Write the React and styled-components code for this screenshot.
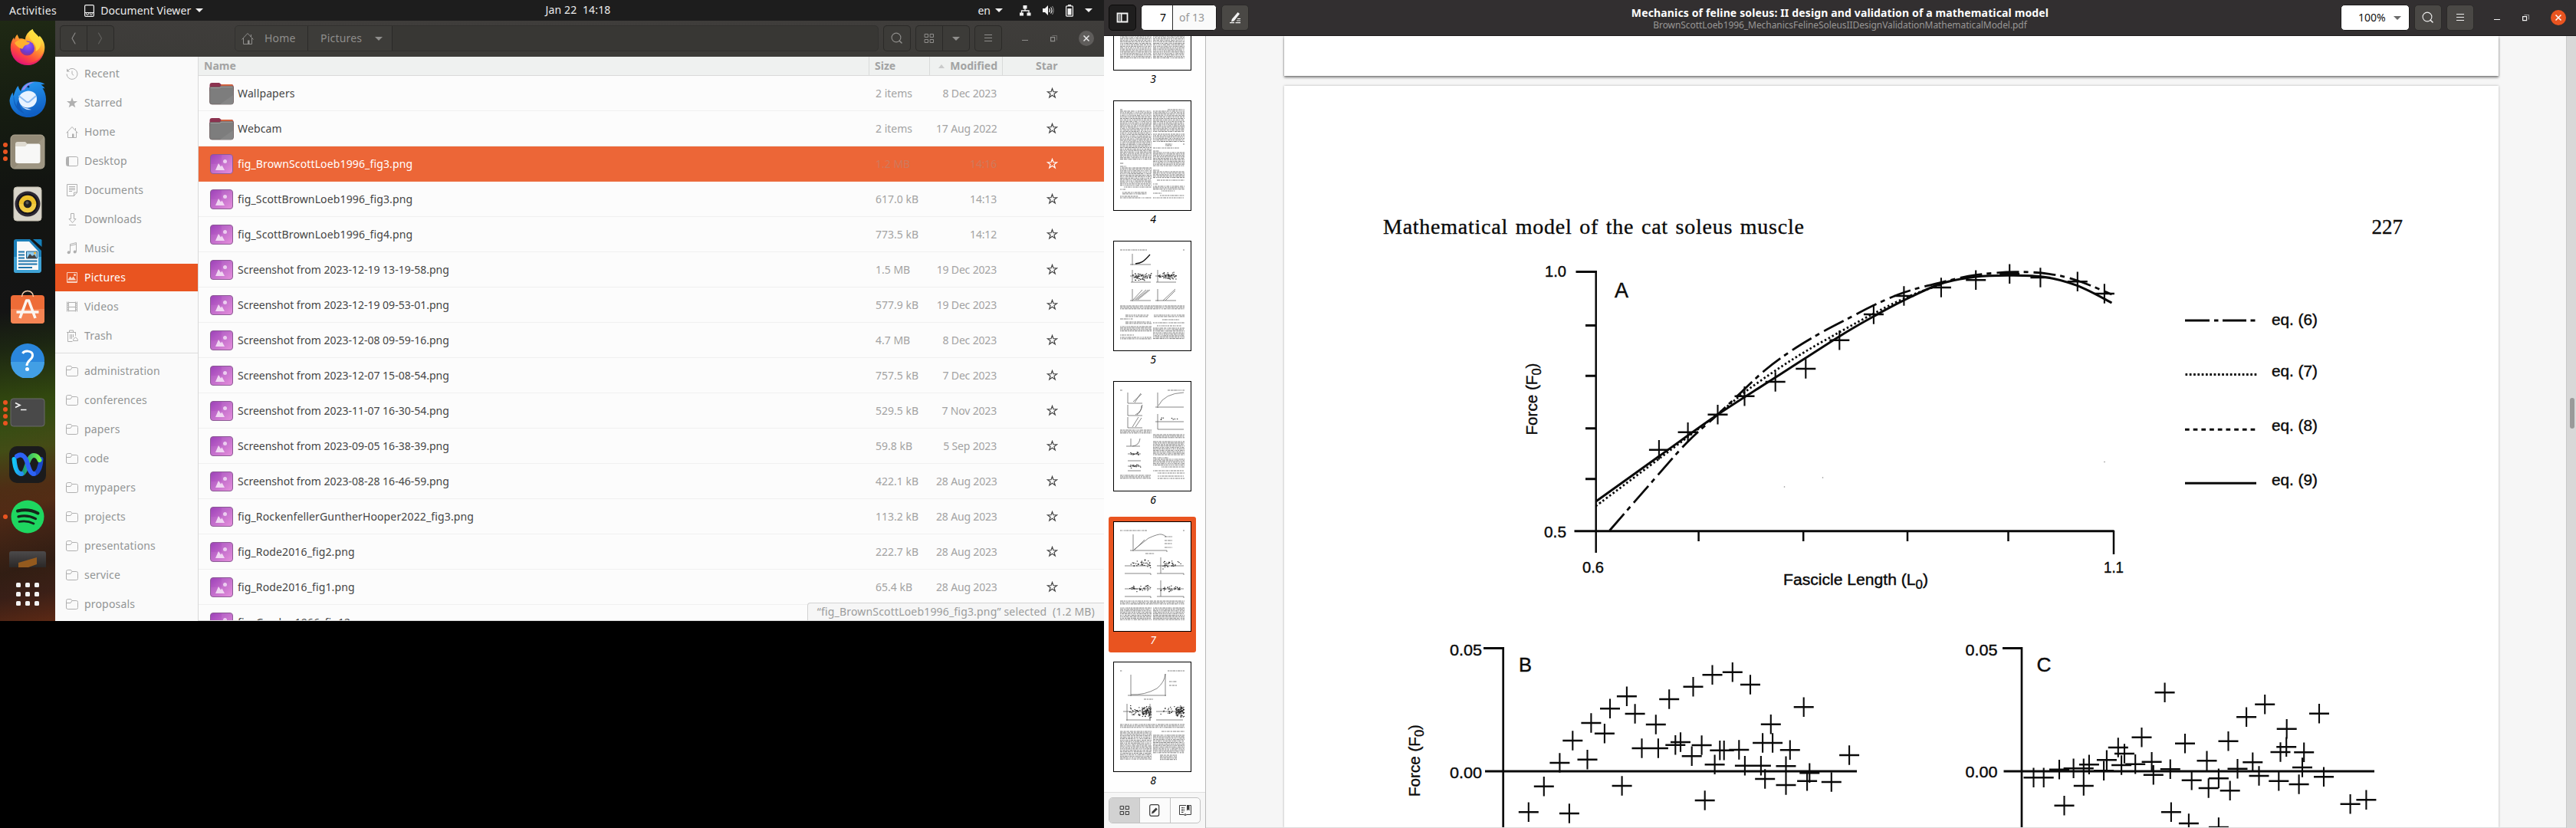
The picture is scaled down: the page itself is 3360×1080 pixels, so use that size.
import React from "react";
import styled, { createGlobalStyle, css } from "styled-components";

const Global = createGlobalStyle`
  *, *::before, *::after { box-sizing: border-box; }
  html, body { margin: 0; padding: 0; background: #000; overflow: hidden; }
  body { font-family: "Noto Sans", "Open Sans", sans-serif; font-size: 14px; line-height: 20px; }
  svg { display: block; flex: none; }
`;

/* ---------- screens ---------- */
const Screens = styled.div`
  display: grid;
  grid-template-columns: 1440px 1920px;
  width: 3360px;
  height: 1080px;
  overflow: hidden;
  background: #000;
`;
const Desktop = styled.div`
  display: grid;
  grid-template-rows: 27px 783px;
  height: 810px;
  overflow: hidden;
`;
const Workspace = styled.div`
  display: grid;
  grid-template-columns: 72px 1fr;
  min-height: 0;
`;

/* ---------- top bar ---------- */
const TopBar = styled.header`
  display: grid;
  grid-template-columns: 1fr auto 1fr;
  align-items: center;
  padding: 0 15px 0 12px;
  background: #1d1d1d;
  color: #ececec;
  white-space: pre;
`;
const BarGroup = styled.div`
  display: flex;
  align-items: center;
  justify-content: ${(p) => (p.$end ? "flex-end" : "flex-start")};
  gap: ${(p) => p.$gap || 0}px;
`;
const BarText = styled.span`
  letter-spacing: ${(p) => p.$ls || 0}px;
  margin-right: ${(p) => p.$mr || 0}px;
`;
const Clock = styled.div`
  letter-spacing: 0.15px;
  padding-left: 71px;
  padding-bottom: 1px;
`;
const Caret = styled.i`
  width: 0;
  height: 0;
  border: 5px solid transparent;
  border-bottom: 0;
  border-top-color: ${(p) => p.$c || "#f2f2f2"};
`;

/* ---------- dock ---------- */
const DockBar = styled.nav`
  display: flex;
  flex-direction: column;
  padding-top: 1px;
  background:
    linear-gradient(165deg, transparent 66%, rgba(110, 52, 16, 0.55) 80%, rgba(40, 24, 18, 0.5) 90%, rgba(110, 46, 20, 0.5) 100%),
    linear-gradient(172deg, #1f2914 0, #161d11 14%, #121411 28%, #141414 48%, #1c2612 54%, #32480f 63%, #3a5117 71%, #3a2a18 77%, #2c1d1c 82%, #3a2314 91%, #2c1c1b 95%, #4a2415 100%);
`;
const DockItem = styled.div`
  position: relative;
  display: flex;
  align-items: center;
  justify-content: center;
  height: 68px;
`;
const Dots = styled.div`
  position: absolute;
  left: 4px;
  top: 0;
  bottom: 0;
  display: flex;
  flex-direction: column;
  justify-content: center;
  gap: 3px;
`;
const Dot = styled.i`
  width: 6px;
  height: 6px;
  border-radius: 50%;
  background: #e95420;
`;
const DockPeek = styled.div`
  height: 32px;
  padding: 10px 12px 0;
`;
const AppsButton = styled.div`
  display: grid;
  grid-template-columns: repeat(3, 6px);
  gap: 6px;
  justify-content: center;
  align-content: start;
  padding-top: 20px;
  i { width: 6px; height: 6px; border-radius: 1.5px; background: #f2f2f2; }
`;

/* ---------- files window ---------- */
const FilesWindow = styled.section`
  display: grid;
  grid-template-rows: 47px 736px;
  min-width: 0;
`;
const FilesHeader = styled.div`
  display: flex;
  align-items: center;
  padding: 6px 13px 7px 6px;
  background: linear-gradient(#3f3d3b, #3c3b38);
  color: #8f8e8c;
`;
const HeaderButton = styled.div`
  display: flex;
  align-items: center;
  justify-content: center;
  width: ${(p) => p.$w}px;
  height: 34px;
  background: #3c3b38;
  box-shadow: inset 0 0 0 1px #2b2a28;
  border-radius: ${(p) => (p.$side === "l" ? "5px 0 0 5px" : p.$side === "r" ? "0 5px 5px 0" : "5px")};
  margin-left: ${(p) => (p.$side === "r" ? -1 : p.$ml || 0)}px;
`;
const PathBar = styled.div`
  display: flex;
  width: 840px;
  height: 34px;
  margin-left: 157px;
  border: 1px solid #32312f;
  border-radius: 5px;
  background: #383734;
  overflow: hidden;
`;
const PathItem = styled.div`
  display: flex;
  align-items: center;
  width: ${(p) => p.$w}px;
  padding-left: ${(p) => p.$pl}px;
  gap: ${(p) => p.$gap}px;
  background: #3d3c39;
  border-right: 1px solid #2b2a28;
  letter-spacing: 0.2px;
`;
const WindowControls = styled.div`
  display: flex;
  align-items: center;
  justify-content: space-between;
  margin-left: ${(p) => p.$ml}px;
  width: ${(p) => p.$w}px;
`;
const FilesBody = styled.div`
  display: grid;
  grid-template-columns: 187px 1fr;
  min-height: 0;
  height: 736px;
  background: #fcfcfc;
`;
const Places = styled.aside`
  display: flex;
  flex-direction: column;
  padding-top: 4px;
  background: #fafafa;
  border-right: 1px solid #d9d9d9;
  overflow: hidden;
`;
const Place = styled.div`
  display: flex;
  align-items: center;
  gap: 8px;
  flex: none;
  height: 36px;
  margin-bottom: 2px;
  padding-left: 14px;
  letter-spacing: 0.18px;
  color: ${(p) => (p.$on ? "#fff" : "#929595")};
  background: ${(p) => (p.$on ? "#e95420" : "transparent")};
`;
const PlacesRule = styled.hr`
  flex: none;
  width: 100%;
  height: 1px;
  margin: 2px 0 5px;
  border: 0;
  background: #dcdcdc;
`;
const Listing = styled.div`
  position: relative;
  display: flex;
  flex-direction: column;
  height: 736px;
  overflow: hidden;
  border-bottom: 1px solid #d9d9d9;
`;
const columns = css`
  display: grid;
  grid-template-columns: 875px 79px 95px 132px;
`;
const ListHeader = styled.div`
  ${columns}
  flex: none;
  height: 25px;
  background: #eff1f0;
  border-bottom: 1px solid #dadada;
  font-weight: 700;
  color: #a2a3a3;
`;
const HeadCell = styled.div`
  display: flex;
  align-items: center;
  gap: 7px;
  justify-content: ${(p) => (p.$end ? "flex-end" : "flex-start")};
  padding: 0 6px ${(p) => (p.$star ? "0 43px" : "0 7px")};
  border-right: ${(p) => (p.$star ? 0 : 1)}px solid #d9dada;
  ${(p) => p.$star && "padding-left: 43px;"}
`;
const SortMark = styled.i`
  border: 4.5px solid transparent;
  border-top: 0;
  border-bottom: 5px solid #c9caca;
`;
const FileRow = styled.div`
  ${columns}
  flex: none;
  align-items: center;
  height: 46px;
  border-bottom: 1px solid ${(p) => (p.$on ? "#ec7449" : "#f0f0f0")};
  background: ${(p) => (p.$on ? "#ec6637" : "#fcfcfc")};
  color: ${(p) => (p.$on ? "#fff" : "#454545")};
`;
const NameCell = styled.div`
  display: flex;
  align-items: center;
  gap: 5px;
  padding-left: 14px;
  letter-spacing: ${(p) => (p.$tight ? 0 : 0.14)}px;
`;
const MetaCell = styled.div`
  padding: 0 8px;
  white-space: nowrap;
  text-align: ${(p) => (p.$end ? "right" : "left")};
  letter-spacing: ${(p) => (p.$end ? -0.17 : 0)}px;
  color: ${(p) => (p.$on ? "#cf7a5c" : "#a3a3a3")};
`;
const StarCell = styled.div`
  padding-left: 57px;
`;
const StatusNote = styled.div`
  position: absolute;
  right: 0;
  bottom: -1px;
  height: 24px;
  padding: 1px 12px 0 12px;
  border: 1px solid #d2d2d2;
  border-width: 1px 0 0 1px;
  border-top-left-radius: 4px;
  background: #f6f6f6;
  color: #9b9c9c;
  white-space: pre;
  letter-spacing: 0.18px;
`;

/* ---------- document viewer ---------- */
const Viewer = styled.section`
  display: grid;
  grid-template-rows: 47px 1033px;
  background: #f6f6f6;
`;
const ViewerHeader = styled.header`
  display: grid;
  grid-template-columns: 660px 1fr 660px;
  align-items: center;
  background: #322f30;
  border-bottom: 1px solid #1e1c1d;
`;
const HeaderSide = styled.div`
  display: flex;
  align-items: center;
  padding: ${(p) => (p.$end ? "0 13px 0 0" : "0 0 0 6px")};
  justify-content: ${(p) => (p.$end ? "flex-end" : "flex-start")};
`;
const ToolButton = styled.div`
  display: flex;
  align-items: center;
  justify-content: center;
  width: ${(p) => p.$w || 34}px;
  height: 34px;
  margin-left: ${(p) => p.$ml || 0}px;
  border: 1px solid ${(p) => (p.$pressed ? "#0c0b0b" : "#2b2a29")};
  border-radius: 5px;
  background: ${(p) => (p.$pressed ? "#1f1e1e" : "#4a4845")};
`;
const PageField = styled.div`
  display: grid;
  grid-template-columns: 41px 1fr;
  width: 99px;
  height: 34px;
  margin-left: 6px;
  border: 1px solid #1b1a1a;
  border-radius: 5px;
  background: #fff;
  line-height: 32px;
  overflow: hidden;
`;
const PageNumber = styled.span`
  text-align: right;
  padding-right: 8px;
  border-right: 1px solid #2b2b2b;
  color: #000;
`;
const PageTotal = styled.span`
  padding-left: 8px;
  color: #979797;
  background: #fafafa;
`;
const ZoomField = styled.div`
  display: flex;
  align-items: center;
  gap: 10px;
  width: 90px;
  height: 34px;
  padding-left: 22px;
  border: 1px solid #1b1a1a;
  border-radius: 5px;
  background: #fff;
  color: #111;
`;
const Titles = styled.div`
  text-align: center;
  color: #fff;
  white-space: nowrap;
`;
const Title = styled.div`
  padding-top: 1px;
  font-weight: 700;
  letter-spacing: 0.14px;
  line-height: 18px;
`;
const Subtitle = styled.div`
  font-size: 12px;
  line-height: 14px;
  letter-spacing: -0.07px;
  color: #999796;
`;
const ViewerBody = styled.div`
  display: grid;
  grid-template-columns: 133px 1fr 13px;
  height: 1033px;
`;
const ThumbPane = styled.aside`
  display: grid;
  grid-template-rows: 986px 47px;
  background: #fefefe;
  border-right: 1px solid #b9b9b9;
  overflow: hidden;
`;
const ThumbList = styled.div`
  display: flex;
  flex-direction: column;
  justify-content: flex-end;
  align-items: center;
  gap: 6px;
  margin-bottom: -1px;
  padding-right: 6px;
  overflow: hidden;
`;
const Thumb = styled.div`
  flex: none;
  display: flex;
  flex-direction: column;
  align-items: center;
  width: 114px;
  height: 177px;
  padding-top: 6px;
  border-radius: 3px;
  background: ${(p) => (p.$on ? "#e95420" : "transparent")};
  color: ${(p) => (p.$on ? "#fff" : "#000")};
`;
const ThumbPaper = styled.div`
  width: 102px;
  height: 144px;
  border: 1px solid #000;
  background: #fff;
`;
const ThumbLabel = styled.div`
  padding-left: 2px;
  line-height: 22px;
  font-style: italic;
`;
const ThumbTools = styled.div`
  position: relative;
  padding: 6px 0 0 6px;
  background: #f6f6f6;
  border-top: 1px solid #dedede;
`;
const Segments = styled.div`
  display: grid;
  grid-template-columns: repeat(3, 1fr);
  width: 120px;
  height: 34px;
  border: 1px solid #c2c2c2;
  border-radius: 5px;
  overflow: hidden;
  background: #fbfbfb;
`;
const Segment = styled.div`
  display: flex;
  align-items: center;
  justify-content: center;
  background: ${(p) => (p.$on ? "#d2d2d2" : "transparent")};
  & + & { border-left: 1px solid #c2c2c2; }
`;
const Canvas = styled.main`
  display: flex;
  flex-direction: column;
  gap: 13px;
  padding: 0 88px 0 102px;
  overflow: hidden;
  border-bottom: 1px solid #dedede;
`;
const PrevSheet = styled.div`
  flex: none;
  height: 52px;
  background: #fff;
  box-shadow: 0 2px 3px rgba(0, 0, 0, 0.5), 0 0 1px rgba(0, 0, 0, 0.35);
`;
const Sheet = styled.article`
  flex: none;
  height: 968px;
  background: #fff;
  box-shadow: 0 0 3px rgba(0, 0, 0, 0.28);
  color: #0a0a0a;
`;
const RunningHead = styled.div`
  display: flex;
  justify-content: space-between;
  height: 228px;
  padding: 166px 125px 0 129px;
  font: 28px/36px "Liberation Serif", serif;
  -webkit-text-stroke: 0.35px #0a0a0a;
`;
const HeadTitle = styled.span`
  letter-spacing: 0.75px;
  word-spacing: 2px;
`;
const Folio = styled.span`
  font-size: 27px;
`;
const Track = styled.div`
  padding: 472px 0 0 4px;
  background: #d8d8d8;
  border-left: 1px solid #c9c9c9;
`;
const Knob = styled.div`
  width: 6px;
  height: 40px;
  border-radius: 3px;
  background: #9a9a9a;
`;
const FigText = styled.text`
  font-family: "Liberation Sans", sans-serif;
  fill: #0a0a0a;
  stroke: #0a0a0a;
  stroke-width: 0.4px;
`;

/* ---------- small icons ---------- */
const line = (c, w = 1) => ({ fill: "none", stroke: c, strokeWidth: w, strokeLinecap: "round", strokeLinejoin: "round" });
const SearchIcon = ({ c }) => (
  <svg width="16" height="16" viewBox="0 0 16 16" {...line(c, 1.1)}><circle cx="7" cy="7" r="5.9" /><path d="M11.2 11.2 14 14" strokeWidth="1.6" /></svg>
);
const MenuIcon = ({ c }) => (
  <svg width="16" height="16" viewBox="0 0 16 16" {...line(c)} strokeLinecap="butt"><path d="M3 3.5h10M3 7.5h10M3 11.5h10" /></svg>
);
const GridIcon = ({ c }) => (
  <svg width="14" height="14" viewBox="0 0 14 14" {...line(c)} strokeLinejoin="miter"><path d="M1.5 1.5h4v4h-4zM8.500 1.500h4v4h-4zM1.500 8.500h4v4h-4zM8.500 8.500h4v4h-4z" /></svg>
);
const MinIcon = ({ c }) => <svg width="8" height="10" viewBox="0 0 8 10"><path d="M0 7h8v1H0z" fill={c} /></svg>;
const MaxIcon = ({ c }) => (
  <svg width="9" height="9" viewBox="0 0 9 9" fill="none" stroke={c}><path d="M.6 2.600h5v5h-5z" strokeWidth="1.2" /><path d="M2.500.5h6v6" opacity=".55" /></svg>
);
const CloseIcon = ({ bg, c }) => (
  <svg width="20" height="20" viewBox="0 0 20 20"><circle cx="10" cy="10" r="10" fill={bg} /><path d="M6.500 6.500l7 7m0-7l-7 7" stroke={c} strokeWidth="1.500" /></svg>
);
const Chevron = ({ flip, c }) => (
  <svg width="10" height="18" viewBox="0 0 10 18" {...line(c, 1.1)}><path d={flip ? "M2.500 2l4 7-4 7" : "M7 2L3 9l4 7"} /></svg>
);
const StarIcon = ({ c }) => (
  <svg width="15" height="15" viewBox="0 0 13 13" fill="none" stroke={c} strokeWidth="1"><path d="M6.500 1.200l1.300 3.700 4 .05-3.200 2.400 1.200 3.900-3.300-2.300-3.300 2.300 1.200-3.900L1.200 4.950l4-.05z" /></svg>
);
const HomeGlyph = ({ c }) => (
  <svg width="16" height="16" viewBox="0 0 16 16" fill="none" stroke={c}><path d="M.5 9.500L8 1.500l7.500 8M2.500 8v7.500h11V8M12.500 3v3" /><path d="M8 10.500h2.500v5H8z" fill={c} stroke="none" /></svg>
);

const placeGlyphs = {
  recent: <g><path d="M3.200 3.300A7 7 0 1 1 1 8.500" /><path d="M8 4.500v4l2.200 1.800" /><path d="M1 1.500v4h4z" className="f" /></g>,
  starred: <path className="f" d="M8 1l1.800 4.900 5.200.2-4.100 3.200 1.400 5L8 11.400l-4.300 2.900 1.400-5L1 6.100l5.200-.2z" />,
  desktop: <g><rect x=".5" y="2.500" width="15" height="12" rx="2" /><path className="f" d="M1 3h3v11H1z" /></g>,
  documents: <g><path d="M1.500.5h13v10.500l-4 4.500h-9z" /><path d="M14.500 11h-4v4.500M4 3.500h8M4 5.500h8M4 7.500h8M4 9.500h4" /></g>,
  downloads: <path d="M6.500.5h4v7h2.500l-4.500 5-4.500-5h2.500zM4 15.500h9" />,
  music: <g><path d="M5.500 13V2.500l8-2V12M5.500 4.500l8-2" /><circle className="f" cx="3.700" cy="13.300" r="2" /><circle className="f" cx="11.700" cy="12.500" r="2" /></g>,
  pictures: <g><path d="M1.500 1.500h13v13h-13z" /><path className="f" d="M2 11.500l3.500-5 2.200 2.500 2-2.500 3.500 5zM2 13h12v2H2z" /><circle className="f" cx="11.500" cy="4.500" r="1.500" /></g>,
  videos: <path d="M1.500 1.500v13M3.500 1.500v13M12.500 1.500v13M14.500 1.500v13M3.500 2.500h9M3.500 8.500h9M3.500 13.500h9M1.500 3.500h2M1.500 6h2M1.500 9h2M1.500 12h2M12.500 3.500h2M12.500 6h2M12.500 9h2M12.500 12h2" />,
  trash: <g><path d="M1 3.500h12M4.500 3.500v-2.500h5v2.500M2.500 4v11.500h6M12.500 4v4M5.500 6v6M7.500 6v6M9.500 6v4" /><path d="M12.500 9.500c-1.500 2-3.500 3-3 5h6c.5-2-1.500-3-3-5z" /></g>,
  folder: <path d="M.5 13V3.500a2 2 0 0 1 2-2h4l1.500 2h5.500a2 2 0 0 1 2 2v7a2 2 0 0 1-2 2h-11a2 2 0 0 1-2-2M.5 6.500h5.500l2-3" />,
};
const GlyphSvg = styled.svg`
  fill: none;
  stroke: ${(p) => p.$c};
  stroke-width: 1;
  .f { fill: ${(p) => p.$c}; stroke: none; }
`;
const PlaceGlyph = ({ name, on }) =>
  name === "home" ? <HomeGlyph c="#b0b0b0" /> : (
    <GlyphSvg width="16" height="16" viewBox="0 0 16 16" $c={on ? "#f8d0c0" : "#b0b0b0"}>{placeGlyphs[name]}</GlyphSvg>
  );

const FolderIcon = () => (
  <svg width="32" height="30" viewBox="0 0 32 30">
    <path d="M.5 4a3 3 0 0 1 3-3h9.500l2.500 2h13a3 3 0 0 1 3 3v6H.5z" fill="#8c3350" />
    <path d="M15.500 3h13a3 3 0 0 1 3 2.500l-17 .5z" fill="#d9653f" />
    <path d="M.5 8a1.500 1.500 0 0 1 1.500-1.500h11l2.500-1.200H30a1.500 1.500 0 0 1 1.500 1.500V26a3 3 0 0 1-3 3h-25a3 3 0 0 1-3-3z" fill="#7d7d7d" stroke="#6a5a5c" strokeWidth=".8" />
    <path d="M1.500 7.500h12l2.500-1.300h14.500" stroke="#a8a8a8" fill="none" strokeWidth=".8" />
    <path d="M31 17v9a3 3 0 0 1-3 3H14z" fill="#868686" />
  </svg>
);
const ImageIcon = () => (
  <svg width="32" height="28" viewBox="0 0 32 28">
    <defs>
      <linearGradient id="im" x1="0" y1="0" x2="1" y2="1"><stop offset="0" stopColor="#9c42b8" /><stop offset="1" stopColor="#e58adb" /></linearGradient>
    </defs>
    <rect x="1.500" y="1.500" width="29" height="25" rx="3.500" fill="url(#im)" stroke="#8b5a94" strokeWidth="1" />
    <path d="M16 2h14v12H16z" fill="#fff" opacity=".07" />
    <path d="M2 14h28v9.500a3 3 0 0 1-3 3H5a3 3 0 0 1-3-3z" fill="#fff" opacity=".06" />
    <path d="M8 22l4-9 3 4.500 1.500-2L20 22z" fill="#f0d6f2" />
    <circle cx="20.500" cy="10.500" r="2.500" fill="#eccdf0" />
  </svg>
);

/* ---------- dock icons ---------- */
const Firefox = () => (
  <svg width="46" height="48" viewBox="0 0 46 48">
    <defs>
      <linearGradient id="ff1" x1=".8" y1=".1" x2=".3" y2="1"><stop offset="0" stopColor="#fff44f" /><stop offset=".35" stopColor="#ffa52e" /><stop offset=".7" stopColor="#ff4a3d" /><stop offset="1" stopColor="#e3107a" /></linearGradient>
      <radialGradient id="ff2" cx=".55" cy=".3" r=".8"><stop offset="0" stopColor="#9059ff" /><stop offset=".6" stopColor="#6a3bd0" /><stop offset="1" stopColor="#a4306f" /></radialGradient>
    </defs>
    <path d="M23 47A22.500 22.500 0 0 1 .8 24C.7 19 2 15 5 11l1 3c.5-3 1.500-5 3.500-7l2.500 5.500c3-.6 6 .1 8 1.200C20 8 24 3 29.500 0c1 4 5 6 8.500 10.500l.500-2C43 13 45.500 18.500 45.300 24 45 37 35 47 23 47z" fill="url(#ff1)" />
    <circle cx="22.500" cy="25" r="9.500" fill="url(#ff2)" />
    <path d="M6 18c4-4 9-5 13-3.500 2 1.500 4 2.500 7 3-1 3-5 3-6 3.500-1.500 1-2 1.500-3.500 4.500C14 26 9 23 6 18z" fill="#ffb02e" />
    <path d="M29.500 0c-4 5-6 9-2 14 4 4 8 9 6 15 6-3 8-9 6-16C37 8 31 6 29.500 0z" fill="#ffdf3d" opacity=".85" />
    <path d="M2 30c4 12 16 17 26 14 8-2 14-8 16-15-2 12-11 18-21 18S4 41 2 30z" fill="#e01574" opacity=".6" />
  </svg>
);
const Thunderbird = () => (
  <svg width="48" height="48" viewBox="0 0 48 48">
    <defs><linearGradient id="tb" x1="0" y1="0" x2=".3" y2="1"><stop offset="0" stopColor="#2aa0f5" /><stop offset="1" stopColor="#0f5fc4" /></linearGradient></defs>
    <path d="M25 47C11 47 1 37 .5 25 1 21 2.500 17 4.500 14.500l1 5C7 14 9 9 11.500 6c1 3 2 5 3.500 7 2-8 9-13 19-12.500 5 .1 9 1 12.500 3.200l-5 .8c2 1 4 3 5 5l-3-.5c2.500 3.500 4.500 9 4.500 14.500C48 37 38 47 25 47z" fill="url(#tb)" />
    <path d="M16 12C20 3 28 .5 33 1c-6 2-10 5-13 10z" fill="#9a8cf0" />
    <path d="M6 17c-2 12 4 22 14 25-6-6-8-14-5-21-4 4-6 8-5 12C7 28 6 23 6 17z" fill="#0e55b4" opacity=".8" />
    <circle cx="25" cy="7" r="1.500" fill="#0a2d66" />
    <path d="M12.500 22c1-6 8-9.500 12.500-9.500 6 0 10.500 3.500 11 9.500.5 7-5 12.500-12 12.500S12 29 12.500 22z" fill="#e8f3ff" />
    <path d="M12.500 19l9.500 7.500c1.500 1 3 1 4.500 0L35 19" fill="none" stroke="#8ebcf0" strokeWidth="2" />
    <path d="M16 32c5 4 8 3 13 5-6 1-10-1-13-5z" fill="#dbeaff" />
  </svg>
);
const FilesApp = () => (
  <svg width="46" height="46" viewBox="0 0 46 46">
    <rect x="1" y="1" width="44" height="44" rx="5" fill="#948b78" stroke="#b0a794" />
    <path d="M45 3v38a4 4 0 0 1-4 4H5z" fill="#a39b88" opacity=".7" />
    <path d="M7 13a3 3 0 0 1 3-3h10l3 3v8H7z" fill="#dedad0" />
    <path d="M7 16h13l3-3.500h14a2.500 2.500 0 0 1 2.500 2.500v20a3 3 0 0 1-3 3H10a3 3 0 0 1-3-3z" fill="#f7f7f6" />
  </svg>
);
const Rhythmbox = () => (
  <svg width="38" height="46" viewBox="0 0 38 46">
    <rect x="1" y="1" width="36" height="44" rx="4" fill="#d9d5ca" stroke="#c3beb0" />
    <circle cx="19" cy="23" r="16.500" fill="#2c2833" /><circle cx="19" cy="23" r="13.500" fill="#14121a" />
    <circle cx="19" cy="23" r="11.300" fill="#edc02c" /><path d="M7.700 23a11.300 11.300 0 0 0 22.600 0z" fill="#f6d65a" opacity=".5" />
    <circle cx="19" cy="23" r="5.300" fill="#222" /><circle cx="18.500" cy="21.500" r="2" fill="#555" />
  </svg>
);
const Writer = () => (
  <svg width="38" height="46" viewBox="0 0 38 46">
    <path d="M4 1h18l15 15v25a4 4 0 0 1-4 4H4a3 3 0 0 1-3-3V4a3 3 0 0 1 3-3z" fill="#1c7fb8" />
    <path d="M1 24h36v17a4 4 0 0 1-4 4H4a3 3 0 0 1-3-3z" fill="#3fa2d5" />
    <path d="M5 4h16l12 13v24H5z" fill="#f9f9f9" />
    <path d="M26 1h10a1.500 1.500 0 0 1 1.500 1.500V11z" fill="#1580ba" />
    <path d="M7 17.500h8M7 21.500h8M7 25.500h8M7 29.500h24.500M7 33.500h24.500M7 38h18" stroke="#1c74ab" strokeWidth="1.800" />
    <path d="M17.500 17h14v9h-14z" fill="#8fcbee" stroke="#1c5f8a" /><path d="M18 26l4-6 3 3 3-2 3 5z" fill="#444" /><circle cx="28.500" cy="19" r="1.500" fill="#f0b030" />
  </svg>
);
const Software = () => (
  <svg width="46" height="48" viewBox="0 0 46 48">
    <rect x="1" y="7" width="44" height="37" rx="4" fill="#ee6c37" /><path d="M1 25h44v15a4 4 0 0 1-4 4H5a4 4 0 0 1-4-4z" fill="#f58453" />
    <path d="M15.500 9c0-10 15-10 15 0" fill="none" stroke="#f3c9a8" strokeWidth="1.500" />
    <path d="M13 37l8.500-23h3L33 37M8.500 29h29" fill="none" stroke="#fbf5f0" strokeWidth="3.600" strokeLinejoin="round" />
  </svg>
);
const HelpApp = () => (
  <svg width="46" height="46" viewBox="0 0 46 46">
    <circle cx="23" cy="23" r="22" fill="#2a86dc" /><path d="M1 25h44a22 22 0 0 1-44 0z" fill="#429fe5" />
    <path d="M16.500 14c2-4 13-4.500 13 2.500 0 6-7.500 6-7.500 13.500" fill="none" stroke="#fff" strokeWidth="3" /><circle cx="22.500" cy="34.500" r="2.500" fill="#fff" />
  </svg>
);
const Terminal = () => (
  <svg width="46" height="38" viewBox="0 0 46 38">
    <rect x="1" y="1" width="44" height="36" rx="3.500" fill="#494949" stroke="#6b6b6b" />
    <path d="M7 6.500l6 3-6 3M14 15.500h7.500" fill="none" stroke="#f4f4f4" strokeWidth="1.700" />
  </svg>
);
const Webex = () => (
  <svg width="48" height="48" viewBox="0 0 48 48">
    <defs>
      <linearGradient id="wb" x1="0" y1="0" x2="1" y2="0"><stop offset="0" stopColor="#12c6f5" /><stop offset="1" stopColor="#2a8cf0" /></linearGradient>
      <linearGradient id="wg" x1="0" y1="0" x2="1" y2="0"><stop offset="0" stopColor="#0a8f80" /><stop offset="1" stopColor="#6ff04c" /></linearGradient>
    </defs>
    <rect width="48" height="48" rx="10" fill="#1b1b1c" />
    <path d="M41.500 17c-.5 10-4 19-9.500 19" fill="none" stroke="#1a47c8" strokeWidth="6" strokeLinecap="round" />
    <path d="M16 36c7 0 7-24 16-24 4 0 6 2.500 7.500 6" fill="none" stroke="url(#wg)" strokeWidth="6" strokeLinecap="round" />
    <path d="M6.500 17c1 11 4 19 9.500 19" fill="none" stroke="url(#wb)" strokeWidth="6" strokeLinecap="round" />
    <path d="M10 13c8-5 12 3 14 10s4 13 8 13" fill="none" stroke="#2d62f5" strokeWidth="6" strokeLinecap="round" />
  </svg>
);
const Spotify = () => (
  <svg width="44" height="44" viewBox="0 0 44 44">
    <circle cx="22" cy="22" r="21.500" fill="#1ed760" />
    <g fill="none" stroke="#14251a" strokeLinecap="round"><path d="M9 14.500c10-2.500 19-1 26.500 3" strokeWidth="4" /><path d="M10 21.800c9-2 16-.5 22.500 2.800" strokeWidth="3.300" /><path d="M11 28.500c7.500-1.600 13-.6 19 2.500" strokeWidth="2.700" /></g>
  </svg>
);
const PeekApp = () => (
  <svg width="48" height="22" viewBox="0 0 48 22">
    <defs><linearGradient id="pk" x1="0" y1="0" x2="0" y2="1"><stop offset="0" stopColor="#4c4a4b" /><stop offset="1" stopColor="#2b2827" /></linearGradient></defs>
    <path d="M0 22V4a3 3 0 0 1 3-3h42a3 3 0 0 1 3 3v18z" fill="url(#pk)" /><path d="M12 22v-6l24-7v9l-11 4z" fill="#945a1e" />
  </svg>
);

const dock = [
  [Firefox, 0], [Thunderbird, 0], [FilesApp, 3], [Rhythmbox, 0], [Writer, 0], [Software, 0],
  [HelpApp, 0], [Terminal, 4], [Webex, 0], [Spotify, 1],
];

const Dock = () => (
  <DockBar>
    {dock.map(([Icon, n], i) => (
      <DockItem key={i}>
        <Dots>{Array.from({ length: n }, (_, k) => <Dot key={k} />)}</Dots>
        <Icon />
      </DockItem>
    ))}
    <DockPeek><PeekApp /></DockPeek>
    <AppsButton>{Array.from({ length: 9 }, (_, k) => <i key={k} />)}</AppsButton>
  </DockBar>
);

/* ---------- files data ---------- */
const places = [
  ["recent", "Recent"], ["starred", "Starred"], ["home", "Home"], ["desktop", "Desktop"], ["documents", "Documents"],
  ["downloads", "Downloads"], ["music", "Music"], ["pictures", "Pictures"], ["videos", "Videos"], ["trash", "Trash"],
];
const bookmarks = ["administration", "conferences", "papers", "code", "mypapers", "projects", "presentations", "service", "proposals"];
const files = [
  ["Wallpapers", "2 items", "8 Dec 2023", "dir"],
  ["Webcam", "2 items", "17 Aug 2022", "dir"],
  ["fig_BrownScottLoeb1996_fig3.png", "1.2 MB", "14:16"],
  ["fig_ScottBrownLoeb1996_fig3.png", "617.0 kB", "14:13"],
  ["fig_ScottBrownLoeb1996_fig4.png", "773.5 kB", "14:12"],
  ["Screenshot from 2023-12-19 13-19-58.png", "1.5 MB", "19 Dec 2023"],
  ["Screenshot from 2023-12-19 09-53-01.png", "577.9 kB", "19 Dec 2023"],
  ["Screenshot from 2023-12-08 09-59-16.png", "4.7 MB", "8 Dec 2023"],
  ["Screenshot from 2023-12-07 15-08-54.png", "757.5 kB", "7 Dec 2023"],
  ["Screenshot from 2023-11-07 16-30-54.png", "529.5 kB", "7 Nov 2023"],
  ["Screenshot from 2023-09-05 16-38-39.png", "59.8 kB", "5 Sep 2023"],
  ["Screenshot from 2023-08-28 16-46-59.png", "422.1 kB", "28 Aug 2023"],
  ["fig_RockenfellerGuntherHooper2022_fig3.png", "113.2 kB", "28 Aug 2023"],
  ["fig_Rode2016_fig2.png", "222.7 kB", "28 Aug 2023"],
  ["fig_Rode2016_fig1.png", "65.4 kB", "28 Aug 2023"],
  ["fig_Gordon1966_fig12.png", "", ""],
];

const Files = () => (
  <FilesWindow>
    <FilesHeader>
      <HeaderButton $w={36} $side="l"><Chevron c="#8f8e8c" /></HeaderButton>
      <HeaderButton $w={36} $side="r"><Chevron flip c="#63625f" /></HeaderButton>
      <PathBar>
        <PathItem $w={95} $pl={8} $gap={14}><HomeGlyph c="#8f8e8c" />Home</PathItem>
        <PathItem $w={110} $pl={16} $gap={17}>Pictures<Caret $c="#8f8e8c" /></PathItem>
      </PathBar>
      <HeaderButton $w={36} $ml={6}><SearchIcon c="#8f8e8c" /></HeaderButton>
      <HeaderButton $w={36} $ml={6} $side="l"><GridIcon c="#8f8e8c" /></HeaderButton>
      <HeaderButton $w={36} $side="r"><Caret $c="#8f8e8c" /></HeaderButton>
      <HeaderButton $w={36} $ml={6}><MenuIcon c="#8f8e8c" /></HeaderButton>
      <WindowControls $ml={26} $w={94}><MinIcon c="#8f8e8c" /><MaxIcon c="#8f8e8c" /><CloseIcon bg="#5f5d5b" c="#e8e8e8" /></WindowControls>
    </FilesHeader>
    <FilesBody>
      <Places>
        {places.map(([g, t]) => <Place key={t} $on={g === "pictures"}><PlaceGlyph name={g} on={g === "pictures"} />{t}</Place>)}
        <PlacesRule />
        {bookmarks.map((t) => <Place key={t}><PlaceGlyph name="folder" />{t}</Place>)}
      </Places>
      <Listing>
        <ListHeader>
          <HeadCell>Name</HeadCell>
          <HeadCell>Size</HeadCell>
          <HeadCell $end><SortMark />Modified</HeadCell>
          <HeadCell $star>Star</HeadCell>
        </ListHeader>
        {files.map(([name, size, date, kind], i) => {
          const on = i === 2;
          return (
            <FileRow key={name} $on={on}>
              <NameCell $tight={name.startsWith("Screen")}>{kind ? <FolderIcon /> : <ImageIcon />}{name}</NameCell>
              <MetaCell $on={on}>{size}</MetaCell>
              <MetaCell $on={on} $end>{date}</MetaCell>
              <StarCell><StarIcon c={on ? "#fff" : "#444"} /></StarCell>
            </FileRow>
          );
        })}
        <StatusNote>“fig_BrownScottLoeb1996_fig3.png” selected  (1.2 MB)</StatusNote>
      </Listing>
    </FilesBody>
  </FilesWindow>
);

/* ---------- page thumbnails ---------- */
const rng = (seed) => () => ((seed = (seed * 16807) % 2147483647) / 2147483647);
const words = (x, y, w, h, seed) => {
  const r = rng(seed * 7919 + 13);
  let d = "";
  for (let yy = y; yy < y + h; yy += 1.9) {
    let xx = x;
    while (xx < x + w) {
      const l = Math.min(0.8 + r() * 3.4, x + w - xx);
      d += `M${xx.toFixed(1)} ${yy.toFixed(1)}h${l.toFixed(1)}`;
      xx += l + 0.5 + r() * 0.5;
    }
  }
  return d;
};
const specks = (x, y, w, h, n, seed) => {
  const r = rng(seed * 104729 + 7);
  let d = "";
  for (let i = 0; i < n; i++) {
    const a = x + r() * w;
    const b = y + ((r() + r()) / 2) * h;
    d += `M${a.toFixed(1)} ${b.toFixed(1)}h1.4`;
  }
  return d;
};
const thumbs = {
  3: { text: [[8, 60, 41, 68], [51, 60, 41, 68]] },
  4: {
    text: [[8, 11, 3, 1], [70, 11, 22, 1], [8, 13, 41, 64], [8, 81, 5, 1], [8, 85, 8, 1], [8, 87, 41, 23], [13, 112, 36, 1], [8, 115, 7, 1], [11, 119, 32, 2], [8, 124, 24, 1], [8, 126, 41, 1],
      [51, 13, 41, 28], [51, 43, 41, 10], [67, 56, 9, 2], [90, 56, 2, 1], [51, 61, 34, 1], [51, 65, 8, 1], [51, 67, 41, 19], [51, 90, 8, 1], [51, 92, 41, 9], [56, 103, 36, 1], [51, 108, 6, 1], [51, 111, 41, 5], [62, 117, 18, 1], [51, 120, 12, 1], [60, 123, 32, 1], [51, 126, 40, 1]],
  },
  5: {
    text: [[8, 11, 35, 1], [90, 11, 2, 1], [8, 84, 84, 5], [15, 96, 30, 2], [8, 101, 17, 1], [15, 105, 34, 2], [8, 111, 41, 6], [8, 122, 18, 1], [8, 125, 41, 3], [52, 96, 40, 3], [63, 102, 22, 1], [51, 106, 41, 1], [56, 110, 32, 1], [51, 113, 41, 4], [51, 119, 41, 9]],
    rule: "M24 16v15m-3-1h27M24 37v16m-3-8h27M22 53h26M57 37v16m-3-8h27M55 53h26M24 62v16m-3-1h27M57 62v16m-3-1h27M25 76l12-13M27 76l15-13M29 76l16-13M31 76l16-13M64 77l16-15M67 77l13-13",
    bold: "M28 29c8-1 10-2 19-12",
    dots: [[24, 40, 24, 12, 60], [57, 40, 24, 10, 60]],
  },
  6: {
    text: [[8, 11, 3, 1], [70, 11, 22, 1], [8, 63, 41, 5], [8, 122, 40, 5], [51, 69, 41, 4], [51, 78, 41, 18], [51, 99, 20, 1], [51, 101, 41, 9], [62, 111, 30, 1], [51, 116, 40, 1], [57, 119, 35, 1], [57, 123, 35, 1], [57, 126, 35, 1]],
    rule: "M18 14v14h19M18 30v14h19M18 46v14h19M25 26l11-10M27 27l8-12M28 43q8-4 9-13M30 43q6-4 6-12M24 59l8-13M28 59l8-12M57 14v20m-3-1h37M58 31Q66 15 91 14M57 42v20M54 52h37M57 62h34M22 74v10m-6 0h18M24 84q9-1 10-10M18 94h17M18 103h17M18 110h17M18 116h17",
    dots: [[20, 90, 14, 8, 14], [20, 106, 14, 8, 14], [60, 45, 26, 12, 8]],
  },
  7: {
    text: [[8, 11, 35, 1], [90, 11, 2, 1], [66, 19, 10, 1], [66, 24, 10, 1], [66, 28, 10, 1], [66, 33, 10, 1], [41, 41, 12, 1], [8, 103, 84, 4], [8, 112, 41, 16], [51, 112, 41, 16]],
    rule: "M25 16v22m-4-1h48v2M26 36L45 21Q58 15 62 16T68 19M27 36L40 23M14 57h34M14 67h34v2M61 46v21M56 57h35M56 67h35v2M14 87h34M14 97h34v2M61 76v21M56 87h35M56 97h35v2",
    dots: [[20, 48, 27, 12, 36], [60, 50, 28, 12, 34], [20, 82, 27, 9, 36], [60, 82, 28, 9, 34]],
  },
  8: {
    text: [[8, 11, 3, 1], [70, 11, 22, 1], [72, 25, 10, 1], [72, 30, 10, 1], [39, 48, 12, 1], [8, 81, 84, 4], [8, 90, 41, 38], [62, 90, 30, 1], [51, 95, 41, 23], [60, 121, 22, 6]],
    rule: "M22 16v28M18 43h50M22 42q18 1 34-8Q66 26 67 15v29M17 54v22M12 64h34M16 75h32M47 54v22M55 64h35M55 75h35",
    dots: [[20, 56, 26, 16, 40], [36, 56, 12, 18, 70], [60, 56, 28, 16, 30], [80, 56, 11, 16, 80]],
  },
};
const ThumbArt = ({ n }) => {
  const t = thumbs[n];
  return (
    <svg width="100" height="142" viewBox="0 0 100 142" fill="none">
      {t.text.map((b, i) => <path key={i} d={words(...b, n * 31 + i + 1)} stroke="#808080" strokeWidth="1" />)}
      {t.rule && <path d={t.rule} stroke="#555" strokeWidth=".7" />}
      {t.bold && <path d={t.bold} stroke="#111" strokeWidth="1.300" />}
      {t.dots && t.dots.map((b, i) => <path key={i} d={specks(...b, n * 17 + i + 1)} stroke="#222" strokeWidth="1" />)}
    </svg>
  );
};

/* ---------- figure ---------- */
const smooth = (pts) => {
  let d = `M${pts[0][0]} ${pts[0][1]}`;
  for (let i = 0; i < pts.length - 1; i++) {
    const p0 = pts[i - 1] || pts[i], p1 = pts[i], p2 = pts[i + 1], p3 = pts[i + 2] || p2;
    d += `C${p1[0] + (p2[0] - p0[0]) / 6} ${p1[1] + (p2[1] - p0[1]) / 6} ${p2[0] - (p3[0] - p1[0]) / 6} ${p2[1] - (p3[1] - p1[1]) / 6} ${p2[0]} ${p2[1]}`;
  }
  return d;
};
const scale = (ox, oy, sx) => ([x, y]) => [+(ox + x / sx).toFixed(1), +(oy + y / 3).toFixed(1)];
const toA = scale(1780, 260, 1.568);
const toB = scale(1800, 780, 2.24);
const toC = scale(2500, 780, 1.823);

const marksA = [[602, 980], [661, 911], [722, 842], [777, 770], [840, 714], [902, 663], [971, 551], [1041, 450], [1103, 378], [1179, 345], [1250, 316], [1319, 292], [1382, 306], [1458, 322], [1513, 369]].map(toA);
const solidA = [[473, 1182], [600, 1008], [722, 842], [850, 685], [971, 536], [1041, 458], [1103, 395], [1179, 330], [1250, 303], [1319, 298], [1390, 304], [1458, 338], [1528, 405]].map(toA);
const dashA = [[501, 1296], [590, 1100], [660, 950], [722, 842], [770, 755], [818, 670], [870, 596], [928, 528], [985, 470], [1045, 411], [1105, 363], [1179, 325], [1250, 296], [1330, 284], [1400, 292], [1458, 318], [1528, 372]].map(toA);
const dotA = [[473, 1200], [600, 1018], [722, 840], [777, 755], [838, 673], [900, 597], [971, 520], [1041, 447], [1110, 382], [1179, 333]].map(toA);
const marksB = [[434, 838], [479, 737], [553, 843], [525, 645], [563, 558], [606, 632], [617, 489], [656, 530], [672, 433], [721, 385], [745, 453], [707, 735], [765, 588], [813, 588], [806, 495], [845, 396], [863, 575], [878, 564], [911, 619], [915, 347], [940, 576], [971, 301], [978, 652], [993, 596], [1005, 596], [1030, 290], [1049, 594], [1066, 656], [1082, 339], [1113, 656], [1118, 567], [1147, 567], [1142, 494], [1125, 708], [1186, 658], [1186, 732], [1198, 595], [1238, 427], [1255, 685], [1248, 716], [1319, 720], [1371, 615], [949, 792]].map(toB);
const marksC = [[278, 703], [302, 703], [339, 671], [351, 812], [373, 667], [397, 735], [397, 667], [410, 652], [445, 676], [452, 634], [479, 585], [487, 654], [494, 609], [520, 650], [535, 545], [559, 641], [563, 692], [590, 370], [603, 670], [605, 838], [638, 569], [647, 882], [654, 713], [690, 637], [694, 744], [718, 706], [718, 897], [741, 560], [745, 754], [763, 668], [784, 466], [799, 643], [814, 696], [828, 416], [861, 716], [865, 603], [880, 512], [879, 583], [909, 729], [917, 663], [921, 604], [957, 452], [968, 700], [1031, 806], [1069, 790]].map(toC);

const Crosses = ({ at }) => (
  <>
    <path d={at.map(([x, y]) => `M${x - 13} ${y}h26`).join("")} strokeWidth="2.500" />
    <path d={at.map(([x, y]) => `M${x} ${y - 12.7}v25.400`).join("")} strokeWidth="2.100" />
  </>
);
const Tag = ({ x, y, w, s = 20, children, ...rest }) => (
  <FigText x={x} y={y} fontSize={s} textLength={w} lengthAdjust="spacingAndGlyphs" {...rest}>{children}</FigText>
);
const Sub = ({ children }) => <tspan fontSize="16" dy="5">{children}</tspan>;
const Close = ({ children }) => <tspan dy="-5">{children}</tspan>;

const Figure = () => (
  <svg width="1584" height="740" viewBox="1675 340 1584 740">
    <g fill="none" stroke="#0a0a0a">
      <path d="M2081.700 354v367" strokeWidth="2.500" />
      <path d="M2055.500 354.500H2083M2068 424.500h14M2068 490.300h14M2068 558.700h14M2068 624.700h14M2053.500 692.700H2757.500" strokeWidth="3" />
      <path d="M2215.600 693v13M2352.200 693v13M2488 693v13M2619.500 693v13M2757 692v31" strokeWidth="2.500" />
      <path d={smooth(solidA)} strokeWidth="3" />
      <path d={smooth(dotA)} strokeWidth="2.800" strokeDasharray="2.500 3" />
      <path d={smooth(dashA)} strokeWidth="2.800" strokeDasharray="29 6 6 7" />
      <Crosses at={marksA} />

      <path d="M2850 418h32M2888 418h5.500M2899 418h31M2935.500 418h6" strokeWidth="3" />
      <path d="M2850.500 488.500h93" strokeWidth="3" strokeDasharray="2.700 2.600" />
      <path d="M2850 560.300h92" strokeWidth="3" strokeDasharray="5.700 5" />
      <path d="M2850 630.300h93" strokeWidth="3" />

      <path d="M1960.700 844v236M2637 844v236" strokeWidth="2.700" />
      <path d="M1935 845.500h26.500M2612 845.500h26" strokeWidth="3" />
      <path d="M1937 1006H2422M2613.500 1006H3097" strokeWidth="2.800" />
      <Crosses at={marksB} />
      <Crosses at={marksC} />
    </g>
    <g fill="#8a8a8a"><circle cx="2327.500" cy="635" r=".8" /><circle cx="2377.500" cy="623" r=".8" /><circle cx="2745" cy="602.500" r=".8" /></g>
    <Tag x={2015} y={360.500} w={28}>1.0</Tag>
    <Tag x={2014} y={700.500} w={29}>0.5</Tag>
    <Tag x={2064} y={747} w={28}>0.6</Tag>
    <Tag x={2744} y={747} w={26}>1.1</Tag>
    <Tag x={2106} y={388} w={18} s={27}>A</Tag>
    <Tag x={2326} y={762.500} w={189}>Fascicle Length (L<Sub>0</Sub><Close>)</Close></Tag>
    <Tag x={0} y={0} w={94} transform="translate(2004.500 567.500) rotate(-90)">Force (F<Sub>0</Sub><Close>)</Close></Tag>
    <Tag x={2963} y={423.500} w={60}>eq. (6)</Tag>
    <Tag x={2963} y={491} w={60}>eq. (7)</Tag>
    <Tag x={2963} y={561.500} w={60}>eq. (8)</Tag>
    <Tag x={2963} y={633} w={60}>eq. (9)</Tag>
    <Tag x={1891} y={855} w={42}>0.05</Tag>
    <Tag x={1891} y={1014.500} w={42}>0.00</Tag>
    <Tag x={1981} y={876} w={17} s={25}>B</Tag>
    <Tag x={0} y={0} w={94} transform="translate(1852 1039) rotate(-90)">Force (F<Sub>0</Sub><Close>)</Close></Tag>
    <Tag x={2563.500} y={854.500} w={42}>0.05</Tag>
    <Tag x={2563.500} y={1014} w={42}>0.00</Tag>
    <Tag x={2656.500} y={876} w={19} s={26}>C</Tag>
  </svg>
);

const DocumentViewer = () => (
  <Viewer>
    <ViewerHeader>
      <HeaderSide>
        <ToolButton $w={36} $pressed>
          <svg width="16" height="16" viewBox="0 0 16 16"><path d="M1.500 2.500h13v11h-13z" fill="none" stroke="#f4f4f4" strokeWidth="1.800" /><path d="M3 4h2.500v8H3z" fill="#8d8d8d" /><path d="M6 3h1.500v10H6z" fill="#f4f4f4" /></svg>
        </ToolButton>
        <PageField><PageNumber>7</PageNumber><PageTotal>of 13</PageTotal></PageField>
        <ToolButton $w={36} $ml={6}>
          <svg width="16" height="16" viewBox="0 0 16 16" fill="#f2f2f2"><path d="M11.500 1l2.500 2-7.500 9.500-3.500 1 .800-3.500z" /><path d="M1 14h6v1.300H1zM11 9h4v1h-4zM10 11.500h5v1h-5zM8.500 14H15v1.300H8.500z" /></svg>
        </ToolButton>
      </HeaderSide>
      <Titles>
        <Title>Mechanics of feline soleus: II design and validation of a mathematical model</Title>
        <Subtitle>BrownScottLoeb1996_MechanicsFelineSoleusIIDesignValidationMathematicalModel.pdf</Subtitle>
      </Titles>
      <HeaderSide $end>
        <ZoomField>100%<Caret $c="#6b6b6b" /></ZoomField>
        <ToolButton $w={36} $ml={6}><SearchIcon c="#eee" /></ToolButton>
        <ToolButton $w={36} $ml={6}><MenuIcon c="#eee" /></ToolButton>
        <WindowControls $ml={26} $w={94}><MinIcon c="#f2f2f2" /><MaxIcon c="#f2f2f2" /><CloseIcon bg="#e95420" c="#fff" /></WindowControls>
      </HeaderSide>
    </ViewerHeader>
    <ViewerBody>
      <ThumbPane>
        <ThumbList>
          {[3, 4, 5, 6, 7, 8].map((n) => (
            <Thumb key={n} $on={n === 7}>
              <ThumbPaper><ThumbArt n={n} /></ThumbPaper>
              <ThumbLabel>{n}</ThumbLabel>
            </Thumb>
          ))}
        </ThumbList>
        <ThumbTools>
          <Segments>
            <Segment $on><GridIcon c="#3a3a3a" /></Segment>
            <Segment><svg width="14" height="16" viewBox="0 0 14 16"><rect x=".7" y=".7" width="12" height="14.600" rx="2" fill="none" stroke="#3a3a3a" strokeWidth="1.200" /><path d="M3 12.500l.8-3 5-5 2 2-5 5z" fill="#3a3a3a" /></svg></Segment>
            <Segment><svg width="16" height="16" viewBox="0 0 16 16" fill="none" stroke="#3a3a3a"><path d="M9 1.500H.5v12h5.500q2 2 4 0h5.500v-12h-2" /><path d="M3 4.500h4M3 6.500h4M3 8.500h4M3 10.500h3M8 12v3" strokeDasharray="2 .5" /><path d="M10 1h3.500v7.500l-1.700-1.500L10 8.500z" fill="#3a3a3a" stroke="none" /></svg></Segment>
          </Segments>
        </ThumbTools>
      </ThumbPane>
      <Canvas>
        <PrevSheet />
        <Sheet>
          <RunningHead><HeadTitle>Mathematical model of the cat soleus muscle</HeadTitle><Folio>227</Folio></RunningHead>
          <Figure />
        </Sheet>
      </Canvas>
      <Track><Knob /></Track>
    </ViewerBody>
  </Viewer>
);

export default function App() {
  return (
    <>
      <Global />
      <Screens>
        <Desktop>
          <TopBar>
            <BarGroup>
              <BarText $ls={0.38} $mr={36}>Activities</BarText>
              <BarText $mr={8}>
                <svg width="13" height="16" viewBox="0 0 13 16" fill="none" stroke="#f2f2f2"><rect x=".6" y=".6" width="11.800" height="14.800" rx="1.500" strokeWidth="1.200" /><path d="M1 10.500h11" /><circle cx="4" cy="11.800" r="1.500" /><circle cx="8.800" cy="11.800" r="1.500" /></svg>
              </BarText>
              <BarText $ls={0.1} $mr={6}>Document Viewer</BarText>
              <Caret />
            </BarGroup>
            <Clock>Jan 22  14:18</Clock>
            <BarGroup $end>
              <BarText $mr={6}>en</BarText>
              <Caret />
              <BarText $mr={13} />
              <BarGroup $end $gap={14}>
                <BarGroup $gap={14}>
                  <svg width="24" height="16" viewBox="0 0 24 16"><path d="M13.500 1h5v4.500h-5zM9 10.500h5v4h-5zM18.500 10.500h5v4h-5z" fill="#f2f2f2" /><path d="M16 5v3M11.500 11V8h9.500v3" fill="none" stroke="#f2f2f2" strokeWidth="1.300" /></svg>
                  <svg width="16" height="16" viewBox="0 0 16 16"><path d="M1 5h3l4-4v13l-4-4H1z" fill="#f2f2f2" /><path d="M9.500 5q1.800 2.500 0 5M11.500 3.500q3 4 0 8" fill="none" stroke="#f2f2f2" strokeWidth="1.100" /><path d="M13.500 2q3.500 5.500 0 11" fill="none" stroke="#9a9a9a" /></svg>
                  <svg width="12" height="16" viewBox="0 0 12 16"><path d="M4 0h4v1.500H4z" fill="#f2f2f2" /><rect x="1.600" y="1.800" width="8.800" height="13.400" rx="1" fill="none" stroke="#f2f2f2" strokeWidth="1.200" /><path d="M3.500 5h5v8.500h-5z" fill="#f2f2f2" /></svg>
                </BarGroup>
                <Caret />
              </BarGroup>
            </BarGroup>
          </TopBar>
          <Workspace>
            <Dock />
            <Files />
          </Workspace>
        </Desktop>
        <DocumentViewer />
      </Screens>
    </>
  );
}
